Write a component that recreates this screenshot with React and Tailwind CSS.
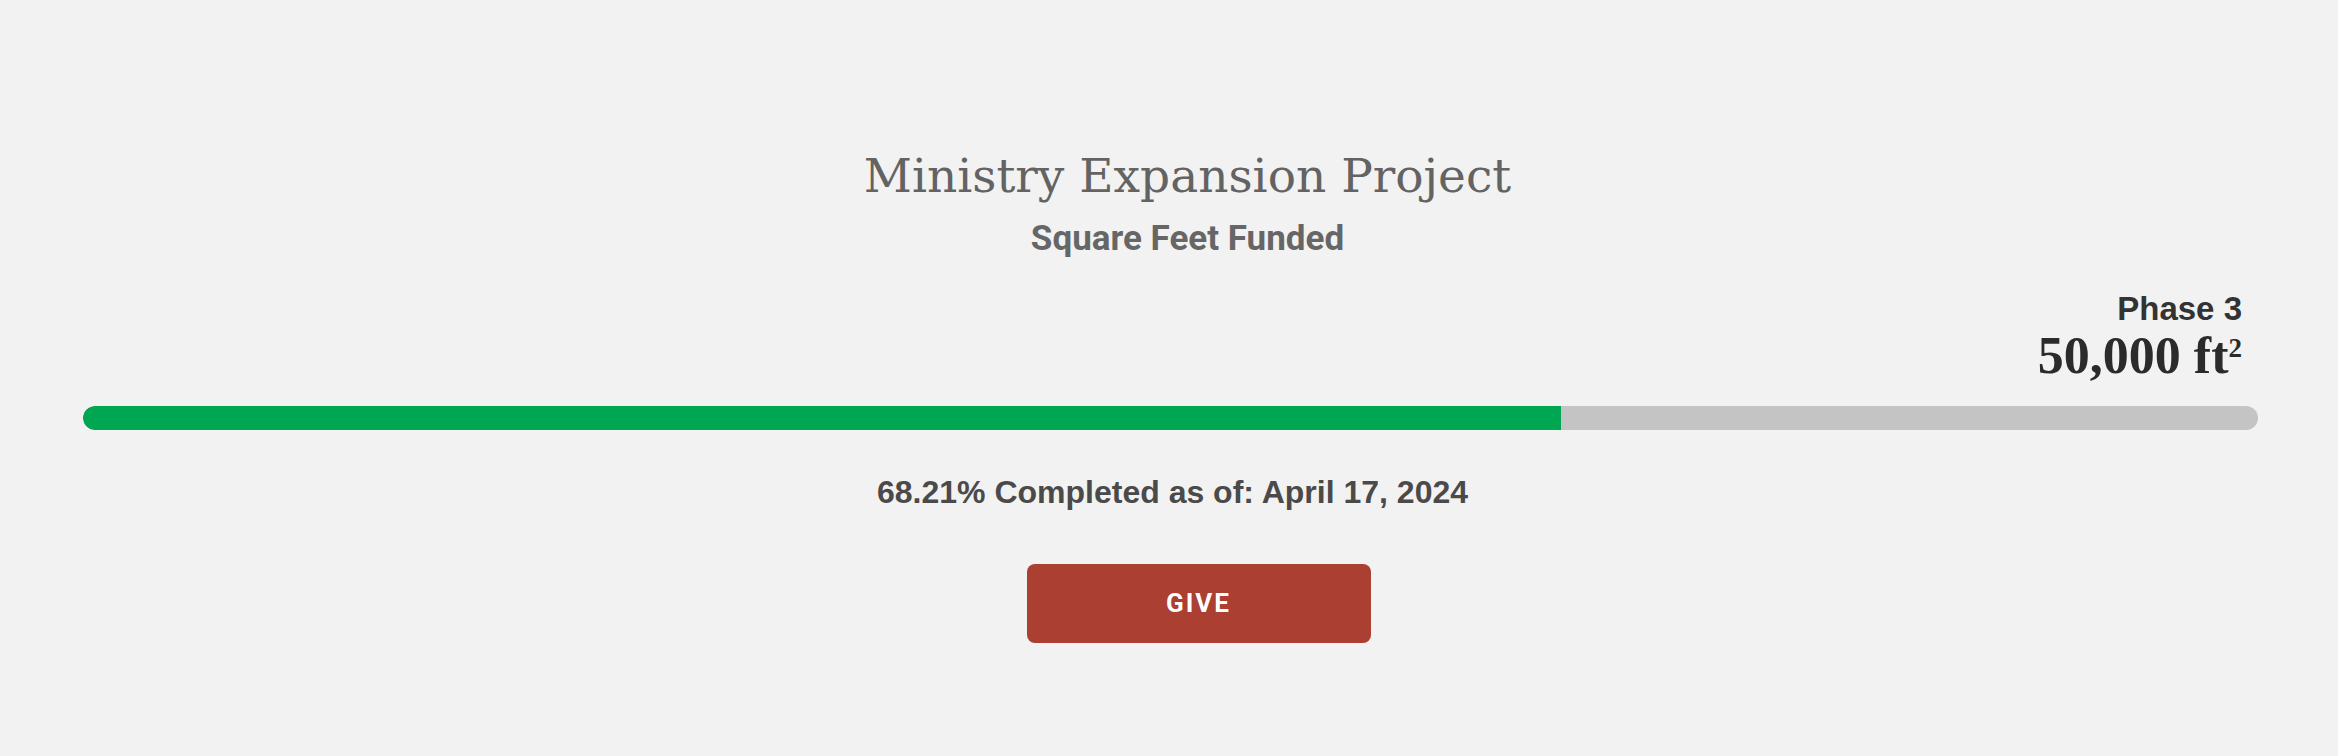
import React from "react";

export default function App() {
  return (
    <div className="w-full h-[756px] bg-[#f2f2f2]">
      <div className="pl-[83px] pr-[80px] pt-[152px]">
        <div className="flex justify-center pl-[34px]">
          <h1 className="text-[47px] leading-none text-[#636363]" style={{ fontFamily: '"DejaVu Serif", serif' }}>
            Ministry Expansion Project
          </h1>
        </div>
        <div className="flex justify-center pl-[34px] mt-[22px]">
          <h2 className="text-[35px] leading-none font-bold text-[#666666]" style={{ fontFamily: 'Roboto, sans-serif' }}>
            Square Feet Funded
          </h2>
        </div>
        <div className="flex flex-col items-end pr-[16px] mt-[36px]">
          <span className="text-[33px] leading-none font-bold text-[#333333]" style={{ fontFamily: '"Liberation Sans", sans-serif' }}>
            Phase 3
          </span>
          <span className="text-[52px] leading-none font-bold text-[#2b2b2b] mt-[5px]" style={{ fontFamily: '"Liberation Serif", serif' }}>
            50,000 ft<span className="text-[27px] leading-none align-top relative top-[5px]">2</span>
          </span>
        </div>
        <div className="mt-[24px] h-[24px] w-full rounded-full bg-[#c4c4c4] overflow-hidden flex">
          <div className="h-full bg-[#00a651] rounded-l-full" style={{ width: "67.95%" }} />
        </div>
        <div className="flex justify-center pl-[4px] mt-[46px]">
          <p className="text-[32px] leading-none font-bold text-[#4a4a4a]" style={{ fontFamily: '"Liberation Sans", sans-serif' }}>
            68.21% Completed as of: April 17, 2024
          </p>
        </div>
        <div className="flex justify-center pl-[56px] mt-[56px]">
          <button className="w-[344px] h-[79px] rounded-[8px] bg-[#ab3f31] text-white text-[26px] font-bold tracking-[2px] flex items-center justify-center" style={{ fontFamily: 'Roboto, sans-serif' }}>
            GIVE
          </button>
        </div>
      </div>
    </div>
  );
}
